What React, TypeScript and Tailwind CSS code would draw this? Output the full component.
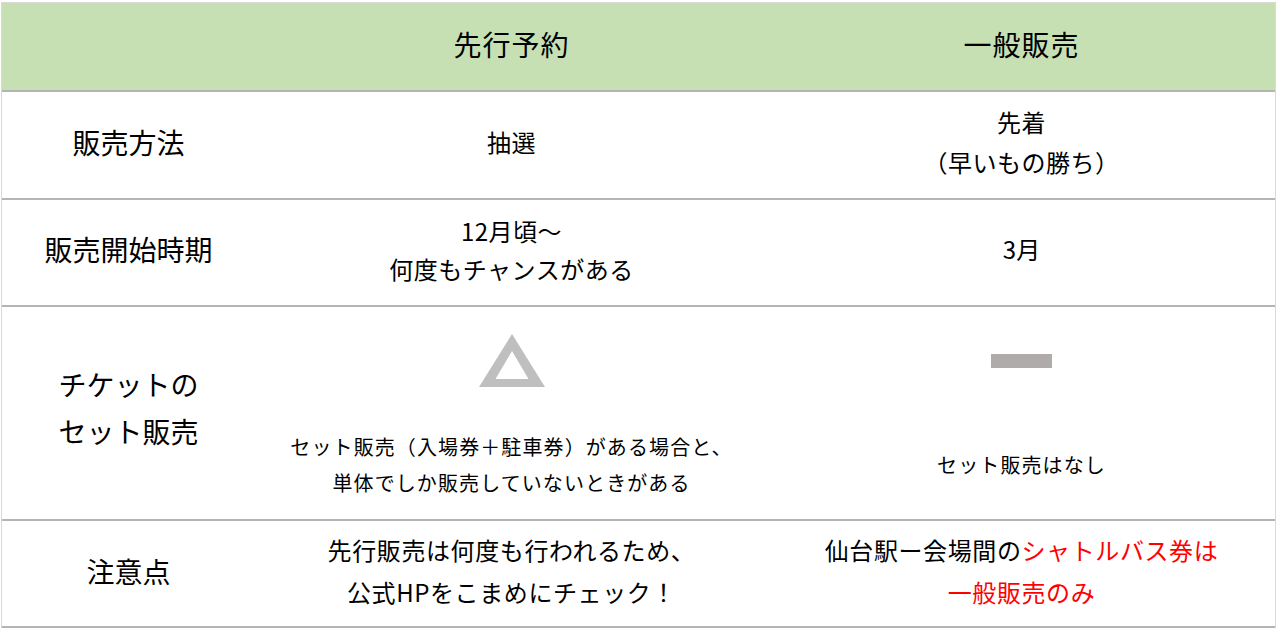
import React from "react";

const Row = ({ children, h }: { children: React.ReactNode; h: string }) => (
  <div className={`grid grid-cols-[253px_513px_507px] border-b-2 border-[#b4b4b4] ${h}`}>{children}</div>
);

const Triangle = () => (
  <svg width="66" height="54" viewBox="0 0 66 54">
    <path
      fillRule="evenodd"
      fill="#bfbfbf"
      d="M33 0 L66 53 L0 53 Z M33 17 L16.5 45 L49.5 45 Z"
    />
  </svg>
);

export default function App() {
  return (
    <div className="w-[1277px] h-[629px] bg-white pt-[2px] pl-[1px] font-['Noto_Sans_CJK_JP','Noto_Sans',sans-serif] text-black">
      <div className="w-[1275px] border-t border-l border-r border-[#d9d9d9]">
        {/* header */}
        <div className="grid grid-cols-[253px_513px_507px] h-[89px] bg-[#c6e0b4] border-b-2 border-[#b4b4b4]">
          <div />
          <div className="flex items-center justify-center text-[28px] tracking-[1px] pb-[6px]">先行予約</div>
          <div className="flex items-center justify-center text-[28px] tracking-[1px] pb-[6px]">一般販売</div>
        </div>

        <Row h="h-[108px]">
          <div className="flex items-center justify-center text-[28px] pb-[7px]">販売方法</div>
          <div className="flex items-center justify-center text-[24px] tracking-[0.5px] pb-[7px]">抽選</div>
          <div className="flex flex-col items-center justify-center text-[24px] tracking-[0.5px] leading-[40px] pb-[7px]">
            <span>先着</span>
            <span>（早いもの勝ち）</span>
          </div>
        </Row>

        <Row h="h-[107px]">
          <div className="flex items-center justify-center text-[28px] pb-[8px]">販売開始時期</div>
          <div className="flex flex-col items-center justify-center text-[24px] tracking-[0.5px] leading-[38px] pb-[6px]">
            <span>12月頃～</span>
            <span>何度もチャンスがある</span>
          </div>
          <div className="flex items-center justify-center text-[24px] pb-[8px]">3月</div>
        </Row>

        <Row h="h-[214px]">
          <div className="flex flex-col items-center justify-center text-[28px] leading-[47px] pb-[10px]">
            <span>チケットの</span>
            <span>セット販売</span>
          </div>
          <div className="flex flex-col">
            <div className="h-[104px] pt-[25px]">
              <div className="h-[58px] flex items-center justify-center">
                <Triangle />
              </div>
            </div>
            <div className="flex-1 flex flex-col items-center justify-center text-[20px] tracking-[1.1px] leading-[36px]">
              <span>セット販売（入場券＋駐車券）がある場合と、</span>
              <span>単体でしか販売していないときがある</span>
            </div>
          </div>
          <div className="flex flex-col">
            <div className="h-[104px] pt-[25px]">
              <div className="h-[58px] flex items-center justify-center">
                <div className="w-[61px] h-[14px] bg-[#afabab]" />
              </div>
            </div>
            <div className="flex-1 flex items-center justify-center text-[20px] tracking-[1.1px]">
              セット販売はなし
            </div>
          </div>
        </Row>

        <Row h="h-[107px]">
          <div className="flex items-center justify-center text-[28px] pb-[6px]">注意点</div>
          <div className="flex flex-col items-center justify-center text-[24px] tracking-[0.6px] leading-[42px] pb-[6px]">
            <span>先行販売は何度も行われるため、</span>
            <span>公式HPをこまめにチェック！</span>
          </div>
          <div className="flex flex-col items-center justify-center text-[24px] tracking-[0.6px] leading-[42px] pb-[6px]">
            <span>
              仙台駅ー会場間の<span className="text-[#ff0000]">シャトルバス券は</span>
            </span>
            <span className="text-[#ff0000]">一般販売のみ</span>
          </div>
        </Row>
      </div>
    </div>
  );
}
